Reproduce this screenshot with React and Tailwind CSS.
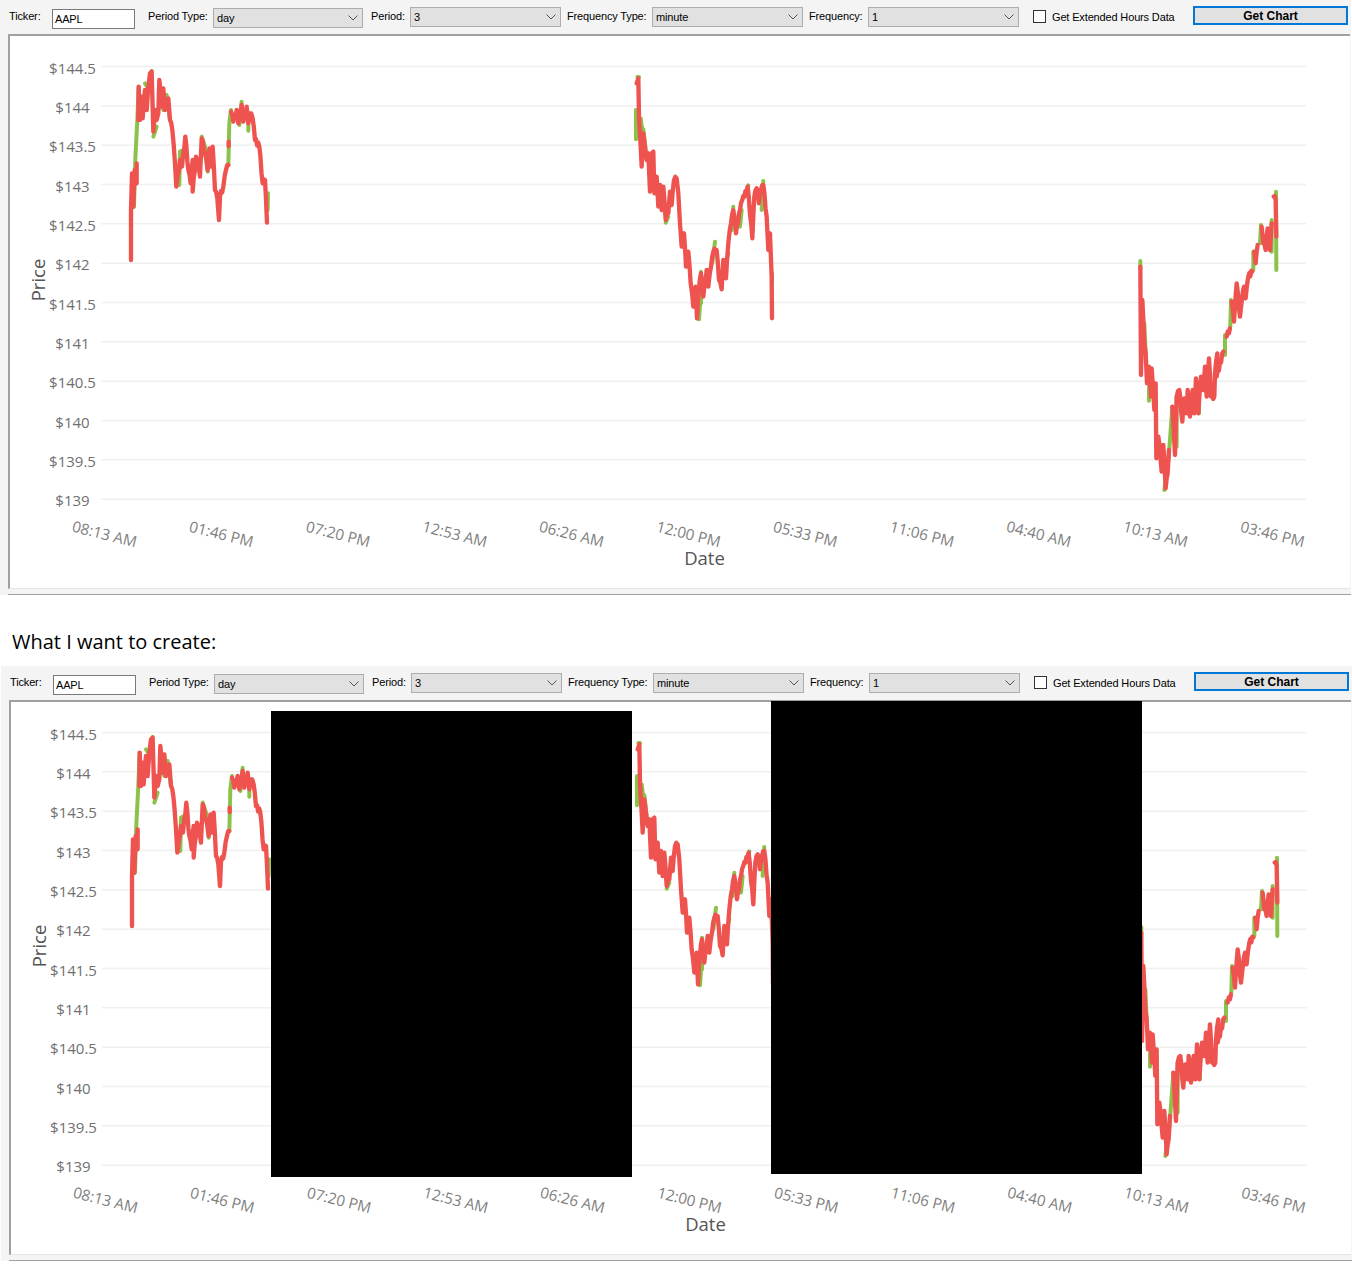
import React from 'react';

const priceLabels = ['$144.5', '$144', '$143.5', '$143', '$142.5', '$142', '$141.5', '$141', '$140.5', '$140', '$139.5', '$139'];
const dateLabels = ['08:13 AM', '01:46 PM', '07:20 PM', '12:53 AM', '06:26 AM', '12:00 PM', '05:33 PM', '11:06 PM', '04:40 AM', '10:13 AM', '03:46 PM'];

// price traces, written in 3x crop coordinates and scaled down by the group transform
const segments = [
  {
    x: 120,
    y: 60,
    green: [
      [[33, 445], [42, 440], [46, 295], [52, 180], [56, 80]],
      [[75, 70], [85, 85], [95, 33]],
      [[100, 230], [110, 200]],
      [[118, 120], [130, 150], [140, 105], [150, 180]],
      [[178, 375], [180, 275], [190, 270]],
      [[245, 230], [255, 260], [263, 335]],
      [[325, 315], [328, 190], [333, 150]],
      [[358, 195], [365, 125]],
      [[385, 212], [385, 170]],
      [[444, 400], [443, 450]],
    ],
    red: [
      [[33, 600], [33, 450], [36, 340], [40, 440], [44, 330], [50, 370], [50, 310]],
      [[55, 180], [56, 80], [60, 180], [64, 110], [68, 175], [75, 90], [80, 150], [85, 80], [90, 40], [95, 35], [100, 215], [105, 150], [110, 180], [115, 160], [118, 60], [125, 140], [130, 85], [135, 150], [145, 115], [150, 180], [157, 210], [165, 310], [169, 380], [177, 330], [180, 300], [186, 320], [196, 230], [205, 330], [212, 370], [218, 300], [218, 395], [228, 290], [240, 350], [245, 235], [255, 280], [263, 330], [268, 265], [272, 320], [278, 260], [285, 390], [292, 415], [297, 480], [300, 410], [310, 380], [318, 330], [325, 315]],
      [[326, 245], [326, 258]],
      [[333, 155], [340, 185], [350, 150], [355, 190], [365, 135], [370, 185], [380, 140], [385, 190], [390, 160], [398, 175], [405, 240], [418, 260], [428, 370], [435, 360], [441, 488]],
    ],
  },
  {
    x: 625,
    y: 70,
    green: [
      [[33, 120], [33, 208]],
      [[37, 21], [42, 21]],
      [[47, 145], [60, 240]],
      [[55, 178], [62, 240]],
      [[122, 458], [130, 440]],
      [[228, 605], [228, 700]],
      [[270, 515], [262, 580]],
      [[310, 550], [295, 610]],
      [[325, 410], [320, 480]],
      [[345, 470], [350, 420]],
      [[370, 346], [360, 380]],
      [[415, 333], [410, 420]],
      [[222, 748], [226, 690]],
      [[441, 610], [441, 640]],
    ],
    red: [
      [[35, 40], [40, 25], [42, 140], [47, 230], [50, 290], [55, 190], [60, 230], [65, 270], [70, 250], [75, 365], [80, 250], [85, 245], [88, 370], [95, 320], [100, 410], [105, 345], [110, 420], [115, 350], [122, 450], [130, 430], [135, 365], [140, 405], [147, 330], [155, 325], [160, 370], [165, 460], [170, 530], [177, 490], [183, 590], [190, 545], [197, 640], [205, 710], [212, 650], [216, 745], [222, 655], [228, 610], [235, 680], [245, 600], [250, 650], [258, 590], [265, 545], [275, 540], [282, 630], [290, 658], [295, 570], [303, 625], [310, 520], [318, 460], [325, 420], [333, 490], [345, 420], [352, 390], [358, 380], [368, 350], [382, 505], [388, 380], [395, 355], [402, 400], [408, 360], [415, 345], [425, 440], [430, 540], [435, 490], [440, 620], [441, 745]],
    ],
  },
  {
    x: 1125,
    y: 180,
    green: [
      [[46, 243], [46, 265]],
      [[58, 430], [62, 520]],
      [[72, 662], [72, 620]],
      [[118, 930], [130, 840], [135, 780], [142, 680]],
      [[155, 650], [155, 800]],
      [[222, 640], [222, 700]],
      [[300, 525], [300, 465]],
      [[318, 360], [316, 440]],
      [[385, 270], [385, 215]],
      [[405, 190], [408, 135]],
      [[440, 215], [440, 120]],
      [[453, 35], [454, 270]],
    ],
    red: [
      [[46, 260], [48, 585], [52, 360], [58, 490], [62, 520], [66, 610], [72, 560], [78, 650], [80, 565], [88, 690], [92, 610], [94, 835], [100, 770], [106, 830], [110, 875], [115, 795], [122, 925], [128, 880], [132, 810]],
      [[142, 680], [150, 825], [155, 650], [163, 630], [172, 725], [178, 655], [185, 700], [188, 630], [195, 710], [203, 630], [208, 700], [213, 595], [220, 700], [228, 590], [235, 630], [240, 560], [245, 650], [252, 535], [258, 650], [268, 650], [270, 580], [277, 520], [275, 590], [295, 515]],
      [[305, 470], [315, 445]],
      [[320, 365], [327, 425], [335, 310], [345, 410], [350, 365], [357, 320], [362, 355], [370, 290], [382, 275]],
      [[388, 215], [392, 250], [398, 195]],
      [[410, 140], [415, 190], [422, 210], [428, 145], [435, 210], [440, 130]],
      [[446, 50], [452, 60], [454, 170]],
    ],
  },
];

const toPoints = (line) => line.map(([x, y]) => `${x},${y}`).join(' ');

// adds the minute-to-minute wobble between the traced points, the ends stay where they are
const roughen = (line) => {
  const out = [];
  line.forEach(([x, y], i) => {
    out.push([x, y]);
    if (i === line.length - 1) return;
    const [nx, ny] = line[i + 1];
    const steps = Math.floor(Math.abs(nx - x) / 3);
    for (let s = 1; s < steps; s++) {
      const t = s / steps;
      const wobble = s % 2 === 0 ? 7 : -7;
      out.push([x + (nx - x) * t, y + (ny - y) * t + wobble]);
    }
  });
  return out;
};

const Chart = () => (
  <svg viewBox="10 36 1340 552" className="block w-[1340px] h-[552px]" style={{ fontFamily: '"Open Sans", sans-serif' }}>
    {priceLabels.map((label, i) => {
      const y = 66.5 + i * 39.33;
      return (
        <g key={label}>
          <line x1="101" x2="1306" y1={y} y2={y} stroke="#f0f0f0" strokeWidth="1.5" />
          <text x="72.5" y={y + 7.2} textAnchor="middle" fontSize="15" fill="#707070">{label}</text>
        </g>
      );
    })}
    {dateLabels.map((label, i) => {
      const x = 104.5 + i * 116.8;
      return (
        <text key={label} x={x} y="539.5" textAnchor="middle" fontSize="15.2" fill="#808080" transform={`rotate(14 ${x} 534)`}>
          {label}
        </text>
      );
    })}
    <text x="45" y="280" textAnchor="middle" fontSize="18.5" fill="#555555" transform="rotate(-90 45 280)">Price</text>
    <text x="704.5" y="565" textAnchor="middle" fontSize="18.5" fill="#555555">Date</text>
    {segments.map((segment) => (
      <g key={segment.x} transform={`translate(${segment.x} ${segment.y}) scale(0.3333)`} fill="none" strokeLinejoin="round" strokeLinecap="round">
        {segment.green.map((line, i) => (
          <polyline key={i} points={toPoints(line)} stroke="#8bc34a" strokeWidth="12" />
        ))}
        {segment.red.map((line, i) => (
          <polyline key={i} points={toPoints(roughen(line))} stroke="#ef5350" strokeWidth="13" />
        ))}
      </g>
    ))}
  </svg>
);

const Select = ({ value, className }) => (
  <div className={`h-[20px] bg-[#e1e1e1] border border-[#adadad] flex items-center justify-between pl-[3px] pr-[4px] text-[11px] tracking-[-0.15px] text-black ${className}`}>
    <span>{value}</span>
    <svg width="10" height="6" viewBox="0 0 10 6" fill="none" stroke="#555555" strokeWidth="1">
      <path d="M0.5 0.5 L5 5 L9.5 0.5" />
    </svg>
  </div>
);

const Label = ({ children, className }) => (
  <span className={`text-[11px] tracking-[-0.15px] leading-[14px] text-black whitespace-nowrap ${className}`}>{children}</span>
);

const ChartWindow = ({ className, children }) => (
  <div className={`relative w-[1351px] h-[595px] bg-[#f4f4f4] ${className}`}>
    <div className="flex items-start h-[34px]">
      <Label className="ml-[9px] mt-[9px] w-[43px]">Ticker:</Label>
      <div className="mt-[9px] w-[83px] h-[20px] bg-white border border-[#7a7a7a] pl-[2px] text-[11px] tracking-[-0.15px] leading-[18px] text-black">AAPL</div>
      <Label className="ml-[13px] mt-[9px] w-[65px]">Period Type:</Label>
      <Select value="day" className="mt-[8px] w-[150px]" />
      <Label className="ml-[8px] mt-[9px] w-[39px]">Period:</Label>
      <Select value="3" className="mt-[7px] w-[151px]" />
      <Label className="ml-[6px] mt-[9px] w-[85px]">Frequency Type:</Label>
      <Select value="minute" className="mt-[7px] w-[151px]" />
      <Label className="ml-[6px] mt-[9px] w-[59px]">Frequency:</Label>
      <Select value="1" className="mt-[7px] w-[151px]" />
      <div className="ml-[14px] mt-[10px] w-[13px] h-[13px] bg-white border border-[#333333]" />
      <Label className="ml-[6px] mt-[10px] w-[141px]">Get Extended Hours Data</Label>
      <button className="mt-[6px] w-[155px] h-[19px] bg-[#e1e1e1] border-2 border-[#0078d7] text-[12px] leading-[14px] font-bold text-black">
        Get Chart
      </button>
    </div>
    <div className="ml-[8px] w-[1342px] h-[555px] bg-white border-l-2 border-t-2 border-[#a0a0a0] border-b border-b-[#e6e6e6]">
      <Chart />
    </div>
    <div className="ml-[8px] mt-[5px] h-px bg-[#a0a0a0]" />
    {children}
  </div>
);

export default function App() {
  return (
    <div className="w-[1352px] h-[1266px] bg-white" style={{ fontFamily: '"Liberation Sans", Arial, sans-serif' }}>
      <ChartWindow />
      <div className="h-[71px] pl-[12px] pt-[34px] text-[20px] leading-[26px] text-black" style={{ fontFamily: '"Open Sans", sans-serif' }}>
        What I want to create:
      </div>
      <ChartWindow className="ml-px">
        <div className="absolute left-[270px] top-[45px] w-[361px] h-[466px] bg-black" />
        <div className="absolute left-[770px] top-[35px] w-[371px] h-[473px] bg-black" />
      </ChartWindow>
    </div>
  );
}
